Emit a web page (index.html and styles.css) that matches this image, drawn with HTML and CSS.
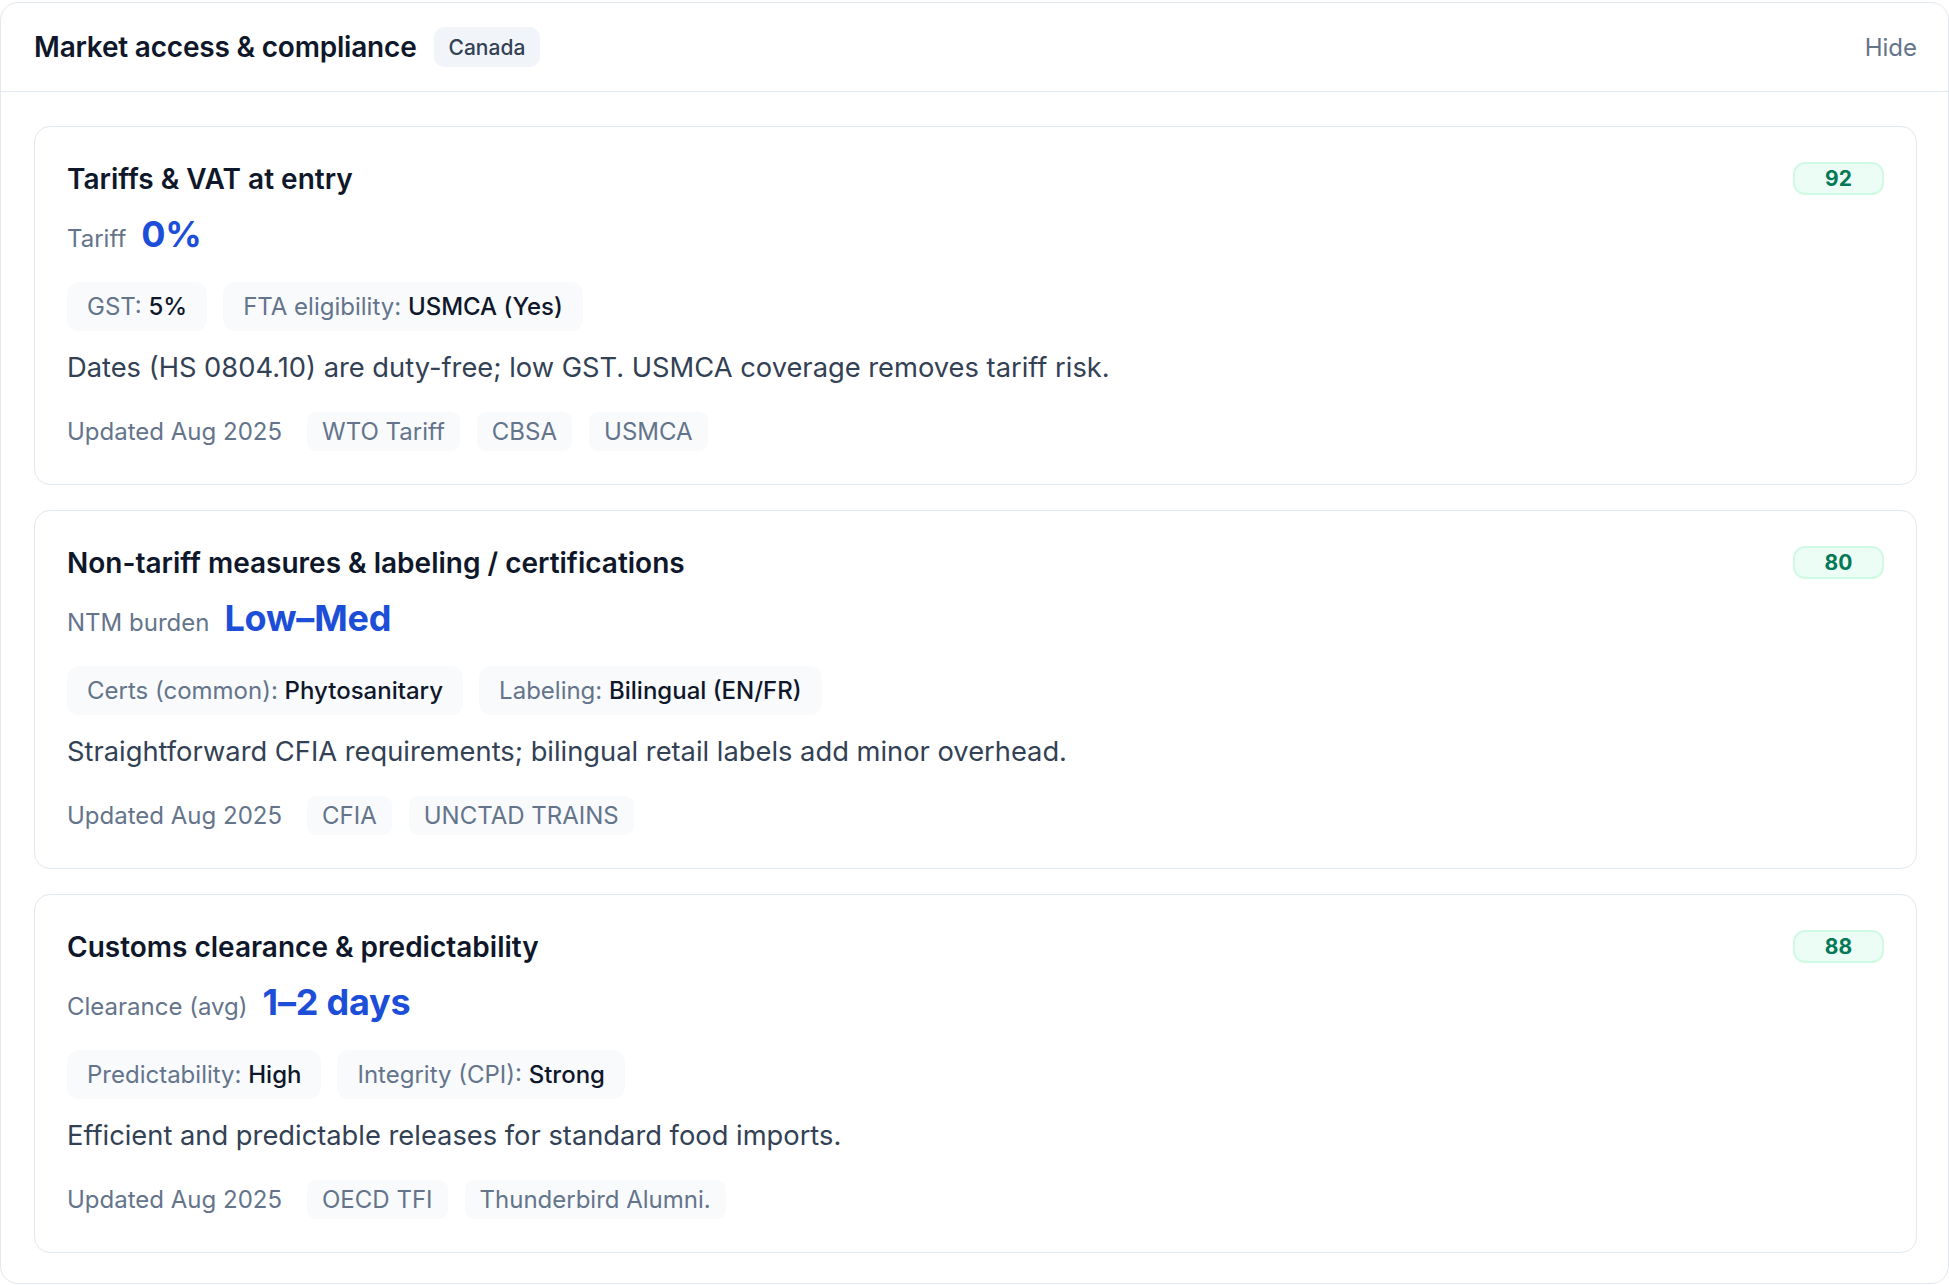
FILE: index.html
```html
<!DOCTYPE html>
<html lang="en">
<head>
<meta charset="utf-8">
<title>Market access &amp; compliance</title>
<link rel="stylesheet" href="styles.css">
</head>
<body>
<section class="panel">
  <header class="panel-head">
    <div class="head-left">
      <h1 class="panel-title">Market access &amp; compliance</h1>
      <span class="country">Canada</span>
    </div>
    <button class="hide-btn" type="button">Hide</button>
  </header>
  <div class="panel-body">
    <article class="card">
      <div class="card-top">
        <h2 class="card-title">Tariffs &amp; VAT at entry</h2>
        <span class="score">92</span>
      </div>
      <div class="metric"><span class="metric-label">Tariff</span><span class="metric-value">0%</span></div>
      <div class="chips">
        <span class="chip"><span class="chip-k">GST:</span> <span class="chip-v">5%</span></span>
        <span class="chip"><span class="chip-k">FTA eligibility:</span> <span class="chip-v">USMCA (Yes)</span></span>
      </div>
      <p class="desc">Dates (HS 0804.10) are duty-free; low GST. USMCA coverage removes tariff risk.</p>
      <div class="foot">
        <span class="updated">Updated Aug 2025</span>
        <span class="src">WTO Tariff</span>
        <span class="src">CBSA</span>
        <span class="src">USMCA</span>
      </div>
    </article>
    <article class="card">
      <div class="card-top">
        <h2 class="card-title">Non-tariff measures &amp; labeling / certifications</h2>
        <span class="score">80</span>
      </div>
      <div class="metric"><span class="metric-label">NTM burden</span><span class="metric-value">Low–Med</span></div>
      <div class="chips">
        <span class="chip"><span class="chip-k">Certs (common):</span> <span class="chip-v">Phytosanitary</span></span>
        <span class="chip"><span class="chip-k">Labeling:</span> <span class="chip-v">Bilingual (EN/FR)</span></span>
      </div>
      <p class="desc">Straightforward CFIA requirements; bilingual retail labels add minor overhead.</p>
      <div class="foot">
        <span class="updated">Updated Aug 2025</span>
        <span class="src">CFIA</span>
        <span class="src">UNCTAD TRAINS</span>
      </div>
    </article>
    <article class="card">
      <div class="card-top">
        <h2 class="card-title">Customs clearance &amp; predictability</h2>
        <span class="score">88</span>
      </div>
      <div class="metric"><span class="metric-label">Clearance (avg)</span><span class="metric-value">1–2 days</span></div>
      <div class="chips">
        <span class="chip"><span class="chip-k">Predictability:</span> <span class="chip-v">High</span></span>
        <span class="chip"><span class="chip-k">Integrity (CPI):</span> <span class="chip-v">Strong</span></span>
      </div>
      <p class="desc">Efficient and predictable releases for standard food imports.</p>
      <div class="foot">
        <span class="updated">Updated Aug 2025</span>
        <span class="src">OECD TFI</span>
        <span class="src">Thunderbird Alumni.</span>
      </div>
    </article>
  </div>
</section>
</body>
</html>
```

FILE: styles.css
```css
* { box-sizing: border-box; }
html, body { margin: 0; padding: 0; background: #ffffff; }
body {
  font-family: Inter, "Noto Sans", "Liberation Sans", sans-serif;
  color: #0f172a;
  padding-top: 2px;
}
.panel {
  border: 1px solid #e2e8f0;
  border-radius: 18px;
  background: #ffffff;
  min-height: 1281px;
}
.panel-head {
  display: flex;
  align-items: center;
  justify-content: space-between;
  height: 89px;
  padding: 0 31px 0 33px;
  border-bottom: 1px solid #e2e8f0;
}
.head-left { display: flex; align-items: center; gap: 17px; }
.panel-title {
  margin: 0;
  font-size: 28px;
  font-weight: 600;
  letter-spacing: -0.2px;
  color: #0f172a;
}
.country {
  display: inline-flex;
  align-items: center;
  height: 40px;
  padding: 0 15px;
  border-radius: 10px;
  background: #f1f5f9;
  color: #334155;
  font-size: 21px;
  font-weight: 500;
}
.hide-btn {
  border: 0;
  background: none;
  padding: 0;
  font: inherit;
  font-size: 24px;
  color: #64748b;
  cursor: pointer;
}
.panel-body {
  display: flex;
  flex-direction: column;
  gap: 25px;
  padding: 34px 31px 30px 33px;
}
.card {
  border: 1px solid #e2e8f0;
  border-radius: 16px;
  padding: 35px 32px 33px 32px;
}
.card-top {
  display: flex;
  align-items: center;
  justify-content: space-between;
  height: 33px;
}
.card-title {
  margin: 0;
  font-size: 28px;
  font-weight: 600;
  color: #0f172a;
}
.score {
  display: inline-flex;
  align-items: center;
  justify-content: center;
  width: 91px;
  height: 33px;
  border: 2px solid #d1fae5;
  border-radius: 12px;
  background: #ecfdf5;
  color: #047857;
  font-size: 21px;
  font-weight: 700;
}
.metric {
  display: flex;
  align-items: baseline;
  gap: 15px;
  margin-top: 18px;
  line-height: 42px;
}
.metric-label { font-size: 24px; color: #64748b; }
.metric-value { font-size: 36px; font-weight: 700; color: #1d4ed8; letter-spacing: -0.2px; }
.chips {
  display: flex;
  gap: 16px;
  margin-top: 22px;
}
.chip {
  display: inline-block;
  padding: 12px 20px;
  border-radius: 12px;
  background: #f8fafc;
  font-size: 24px;
  line-height: 25px;
  white-space: pre;
}
.chip-k { color: #64748b; }
.chip-v { color: #0f172a; font-weight: 500; }
.desc {
  margin: 21px 0 0;
  font-size: 27.3px;
  line-height: 32px;
  color: #334155;
}
.foot {
  display: flex;
  align-items: center;
  gap: 17px;
  margin-top: 28px;
}
.updated {
  font-size: 24px;
  color: #64748b;
  margin-right: 8px;
}
.src {
  display: inline-block;
  padding: 6px 15px;
  border-radius: 9px;
  background: #f8fafc;
  font-size: 24px;
  line-height: 27px;
  color: #64748b;
}
```
